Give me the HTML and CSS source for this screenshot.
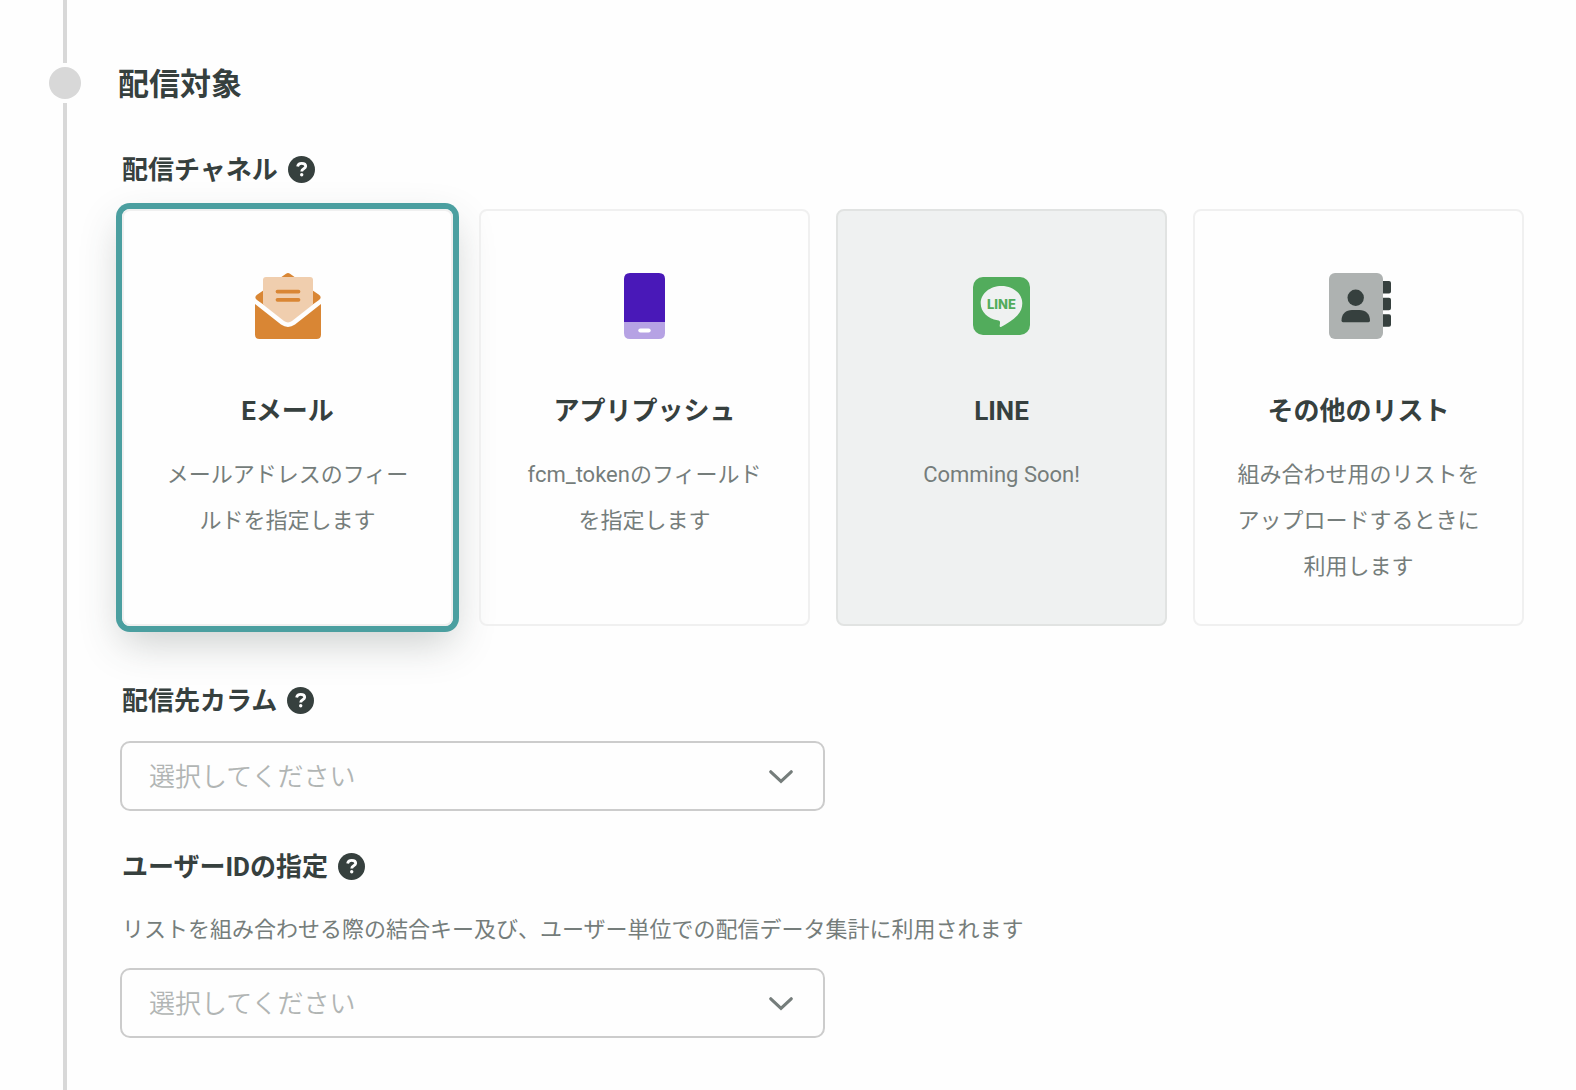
FILE: index.html
```html
<!DOCTYPE html>
<html lang="ja">
<head>
<meta charset="utf-8">
<meta name="viewport" content="width=device-width, initial-scale=1">
<title>配信対象</title>
<link rel="stylesheet" href="styles.css">
</head>
<body>
<svg class="sprite" aria-hidden="true">
  <symbol id="help" viewBox="0 0 27 27">
    <circle cx="13.5" cy="13.5" r="13.5" fill="#36403e"/>
    <path d="M9.600 10.400C10 8.100 11.500 7.300 13.700 7.300c2.300 0 4 1.100 4 3 0 2.700-4 2.300-4 5.100" fill="none" stroke="#fefefe" stroke-width="2.800"/>
    <circle cx="13.700" cy="18.700" r="1.700" fill="#fefefe"/>
  </symbol>
  <symbol id="chevron" viewBox="0 0 24 14">
    <path d="M1.800 1.800 12 11.300 22.200 1.800" fill="none" stroke="#757d7b" stroke-width="3.200" stroke-linecap="round" stroke-linejoin="miter"/>
  </symbol>
</svg>
<main class="step">
  <div class="rail">
    <span class="rail-lead"></span>
    <span class="rail-dot"></span>
    <span class="rail-line"></span>
  </div>
  <div class="content">
    <h2 class="heading">配信対象</h2>

    <div class="field">
      <div class="label-row">
        <span class="label" id="channel-label">配信チャネル</span>
        <button class="help" type="button" aria-label="ヘルプ"><svg><use href="#help"/></svg></button>
      </div>
      <div class="cards" role="radiogroup" aria-labelledby="channel-label">
        <label class="card">
          <input class="card-radio" type="radio" name="channel" checked>
          <svg class="card-icon" viewBox="0 0 66 66">
            <path d="M25 5 31 .8Q33-.6 35 .8L41 5ZM9 17 2 21.800Q-1.300 24.500 2 27L9 32ZM57 17 64 21.800Q67.300 24.500 64 27L57 32Z" fill="#d98634"/>
            <path d="M8 7Q8 4 11 4H55Q58 4 58 7V31.500L37 48Q33 50.800 29 48L8 31.500Z" fill="#f0ceae"/>
            <path d="M0 31 26 51.500Q33 56.300 40 51.500L66 31V61.500Q66 66 61.500 66H4.500Q0 66 0 61.500Z" fill="#d98634"/>
            <path d="M22.500 18.600H43.500M22.500 26.800H43.500" stroke="#d98634" stroke-width="3.800" stroke-linecap="round"/>
          </svg>
          <span class="card-title">Eメール</span>
          <span class="card-text">メールアドレスのフィールドを指定します</span>
        </label>
        <label class="card">
          <input class="card-radio" type="radio" name="channel">
          <svg class="card-icon" viewBox="-12 0 66 66">
            <path d="M0 49V6Q0 0 6 0H35Q41 0 41 6V49Z" fill="#4918b8"/>
            <path d="M0 49H41V60Q41 66 35 66H6Q0 66 0 60Z" fill="#b6a2e4"/>
            <path d="M16.300 57.600H24.700" stroke="#fff" stroke-width="4" stroke-linecap="round"/>
          </svg>
          <span class="card-title">アプリプッシュ</span>
          <span class="card-text">fcm_tokenのフィールドを指定します</span>
        </label>
        <label class="card card-disabled">
          <input class="card-radio" type="radio" name="channel" disabled>
          <svg class="card-icon" viewBox="-4 -4 66 66">
            <rect width="57" height="58" rx="10" fill="#52ac5c"/>
            <path d="M28.500 9C17 9 7.700 16.500 7.700 26.200c0 8.800 7.300 15.500 16.800 17 2.300.4 2.700 1 2.500 3l-.3 2.600c-.1 1.300.7 1.600 1.700 1 5-2.700 11.700-6.800 16.100-11.600 3.200-3.500 4.800-7.400 4.800-12C49.300 16.500 40 9 28.500 9Z" fill="#eff1f1"/>
            <text class="line-mark" x="28.500" y="32" text-anchor="middle">LINE</text>
          </svg>
          <span class="card-title">LINE</span>
          <span class="card-text">Comming Soon!</span>
        </label>
        <label class="card">
          <input class="card-radio" type="radio" name="channel">
          <svg class="card-icon" viewBox="-3 0 66 66">
            <rect width="54" height="66" rx="6" fill="#aeb2b1"/>
            <path d="M54 8h6q2 0 2 2v8.500q0 2-2 2h-6ZM54 24.700h6q2 0 2 2v8.500q0 2-2 2h-6ZM54 41.200h6q2 0 2 2v8.500q0 2-2 2h-6Z" fill="#36403e"/>
            <circle cx="26.700" cy="24.700" r="8.200" fill="#36403e"/>
            <path d="M12.500 47.500C12.500 41 17 37 23 37h7.500C36.500 37 41 41 41 47.500Q41 49.200 39.500 49.200H14Q12.500 49.200 12.500 47.500Z" fill="#36403e"/>
          </svg>
          <span class="card-title">その他のリスト</span>
          <span class="card-text">組み合わせ用のリストをアップロードするときに利用します</span>
        </label>
      </div>
    </div>

    <div class="field field-column">
      <div class="label-row">
        <label class="label" for="column">配信先カラム</label>
        <button class="help" type="button" aria-label="ヘルプ"><svg><use href="#help"/></svg></button>
      </div>
      <div class="select-wrap">
        <select class="select" id="column"><option>選択してください</option></select>
        <svg class="chevron"><use href="#chevron"/></svg>
      </div>
    </div>

    <div class="field field-user">
      <div class="label-row">
        <label class="label" for="user-id">ユーザーIDの指定</label>
        <button class="help" type="button" aria-label="ヘルプ"><svg><use href="#help"/></svg></button>
      </div>
      <p class="note">リストを組み合わせる際の結合キー及び、ユーザー単位での配信データ集計に利用されます</p>
      <div class="select-wrap">
        <select class="select" id="user-id"><option>選択してください</option></select>
        <svg class="chevron"><use href="#chevron"/></svg>
      </div>
    </div>
  </div>
</main>
</body>
</html>
```

FILE: styles.css
```css
* {
  box-sizing: border-box;
}

body {
  margin: 0;
  background: #fefefe;
  color: #36403e;
  font-family: Roboto, "Noto Sans CJK JP", sans-serif;
}

.sprite {
  display: none;
}

.step {
  display: flex;
  gap: 37px;
  min-height: 100vh;
  padding: 0 50px 0 49px;
}

/* Vertical timeline with the marker of this step */
.rail {
  display: flex;
  flex-direction: column;
  align-items: center;
  flex: none;
  width: 32px;
}

.rail-lead,
.rail-line {
  width: 4px;
  background: #d8d8d8;
}

.rail-lead {
  height: 63px;
}

.rail-dot {
  width: 32px;
  height: 32px;
  margin: 4px 0;
  border-radius: 50%;
  background: #d8d8d8;
}

.rail-line {
  flex: 1;
}

.content {
  flex: 1;
  min-width: 0;
  padding: 62px 0 52px;
}

.heading {
  margin: 0;
  font-size: 31px;
  line-height: 46px;
  font-weight: 700;
}

.field {
  margin-top: 38px;
  padding: 0 2px;
}

.field-column {
  margin-top: 51px;
}

.field-user {
  margin-top: 32px;
}

.label-row {
  display: flex;
  align-items: center;
  gap: 10px;
  height: 46px;
  padding-left: 2px;
}

.label {
  padding-top: 2px;
  font-size: 26px;
  line-height: 46px;
  font-weight: 700;
}

.help {
  display: flex;
  width: 27px;
  height: 27px;
  padding: 0;
  border: 0;
  background: none;
}

.help svg {
  width: 27px;
  height: 27px;
}

.cards {
  display: grid;
  grid-template-columns: repeat(4, 1fr);
  gap: 26px;
  margin-top: 17px;
  padding-left: 2px;
}

.card {
  position: relative;
  display: flex;
  flex-direction: column;
  align-items: center;
  padding: 62px 38px 34px;
  border: 2px solid #f0f0f0;
  border-radius: 8px;
  text-align: center;
}

.card:has(:checked) {
  box-shadow: 0 0 0 6px #4b9fa0, 0 16px 40px rgba(54, 64, 62, 0.26);
}

.card-disabled {
  border-color: #e1e3e2;
  background: #eff1f1;
}

.card-radio {
  position: absolute;
  inset: 0;
  margin: 0;
  appearance: none;
}

.card-icon {
  width: 66px;
  height: 66px;
}

.line-mark {
  font-family: Inter, sans-serif;
  font-size: 13px;
  font-weight: 800;
  fill: #52ac5c;
}

.card-title {
  margin-top: 49px;
  font-size: 26px;
  line-height: 46px;
  font-weight: 700;
}

.card-text {
  margin-top: 18px;
  font-size: 22px;
  line-height: 46px;
  color: #757d7b;
}

.note {
  margin: 18px 0 15px;
  padding-left: 2px;
  font-size: 22px;
  line-height: 46px;
  color: #757d7b;
}

.select-wrap {
  position: relative;
  max-width: 705px;
}

.field-column .select-wrap {
  margin-top: 18px;
}

.select {
  display: block;
  width: 100%;
  height: 70px;
  padding: 2px 60px 0 27px;
  border: 2px solid #cccccc;
  border-radius: 10px;
  background: #fefefe;
  color: #b1b5b4;
  font-family: inherit;
  font-size: 26px;
  font-weight: 350;
  appearance: none;
}

.chevron {
  position: absolute;
  top: 29px;
  right: 32px;
  width: 24px;
  height: 14px;
  pointer-events: none;
}
```
